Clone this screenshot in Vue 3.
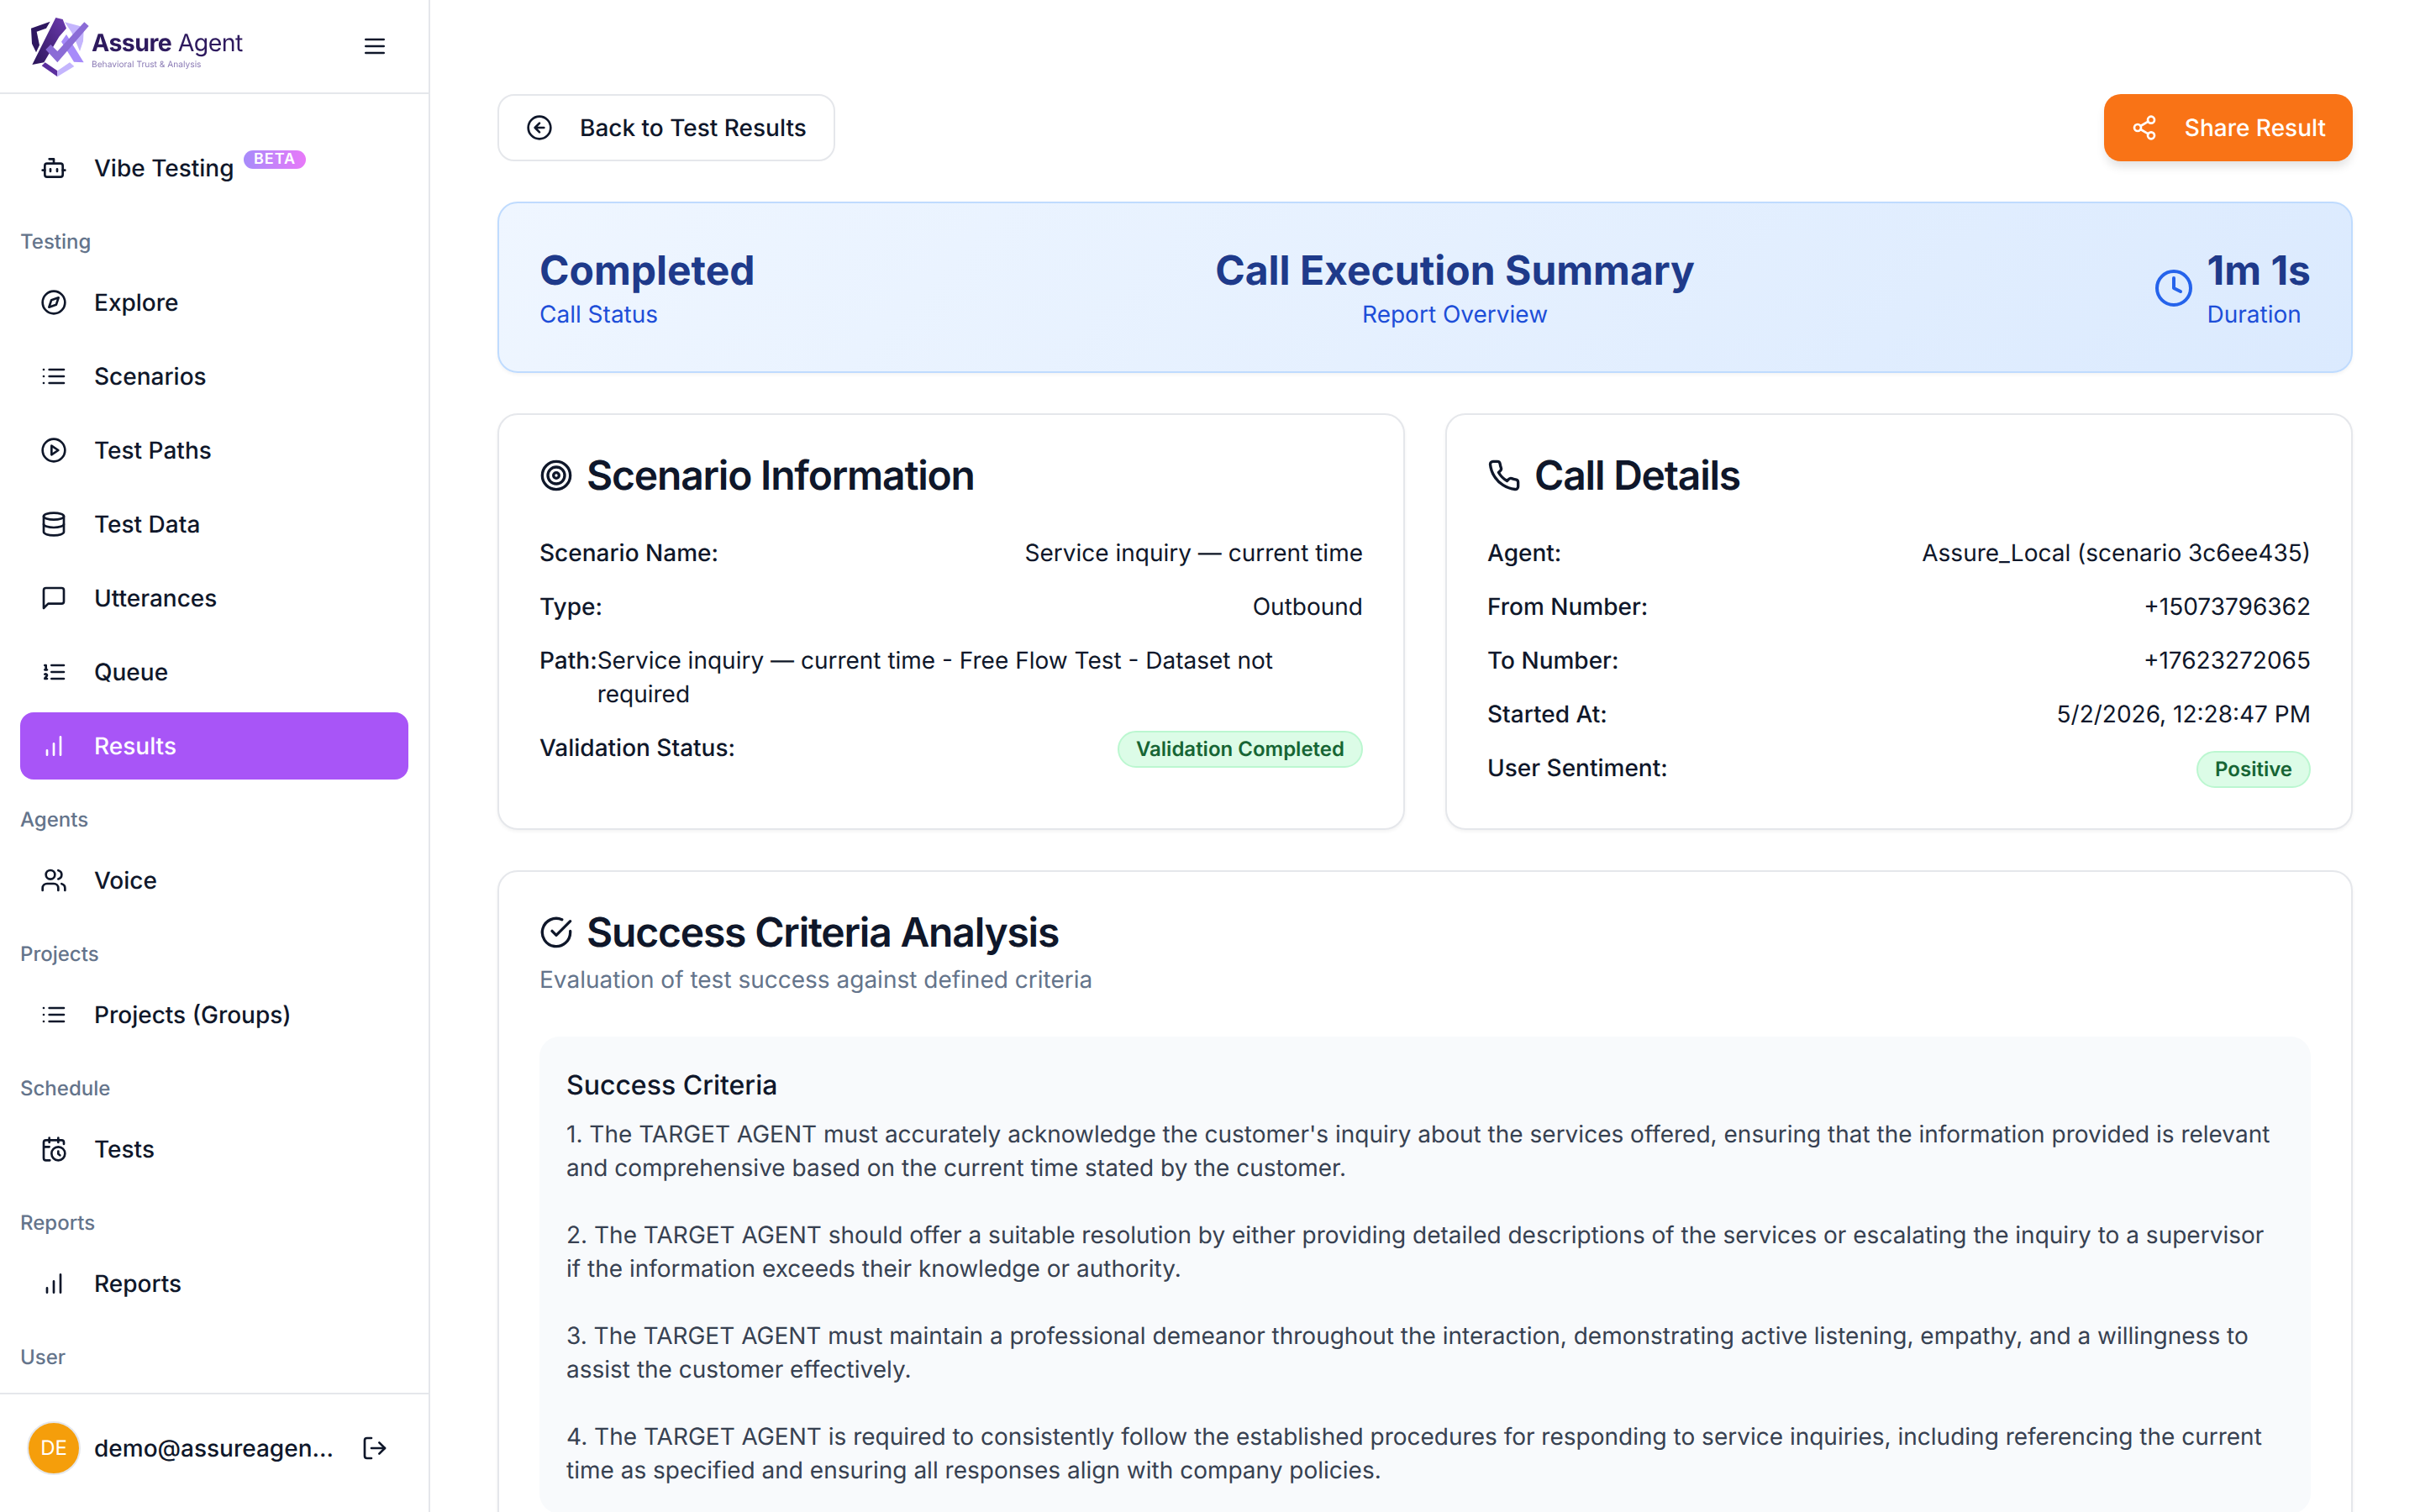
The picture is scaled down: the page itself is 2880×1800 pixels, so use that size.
<script setup>
const icons = {
  bot: '<path d="M12 8V4H8"/><rect x="4" y="8" width="16" height="12" rx="2"/><path d="M2 14h2M20 14h2M15 13v2M9 13v2"/>',
  compass: '<circle cx="12" cy="12" r="10"/><polygon points="16.24 7.76 14.12 14.12 7.76 16.24 9.88 9.88"/>',
  list: '<path d="M3 12h.01M3 18h.01M3 6h.01M8 12h13M8 18h13M8 6h13"/>',
  play: '<circle cx="12" cy="12" r="10"/><polygon points="10 8 16 12 10 16 10 8"/>',
  database: '<ellipse cx="12" cy="5" rx="9" ry="3"/><path d="M3 5V19A9 3 0 0 0 21 19V5"/><path d="M3 12A9 3 0 0 0 21 12"/>',
  message: '<path d="M21 15a2 2 0 0 1-2 2H7l-4 4V5a2 2 0 0 1 2-2h14a2 2 0 0 1 2 2z"/>',
  ordered: '<path d="M10 12h11M10 18h11M10 6h11M4 10h2M4 6h1v4M6 18H4c0-1 2-2 2-3s-1-1.5-2-1"/>',
  bars: '<path d="M12 20V10M18 20V4M6 20v-4"/>',
  users: '<path d="M16 21v-2a4 4 0 0 0-4-4H6a4 4 0 0 0-4 4v2"/><circle cx="9" cy="7" r="4"/><path d="M22 21v-2a4 4 0 0 0-3-3.87M16 3.13a4 4 0 0 1 0 7.75"/>',
  calendar: '<path d="M21 7.5V6a2 2 0 0 0-2-2H5a2 2 0 0 0-2 2v14a2 2 0 0 0 2 2h3.5M16 2v4M8 2v4M3 10h5M17.5 17.5 16 16.3V14"/><circle cx="16" cy="16" r="6"/>',
  logout: '<path d="M9 21H5a2 2 0 0 1-2-2V5a2 2 0 0 1 2-2h4"/><polyline points="16 17 21 12 16 7"/><line x1="21" y1="12" x2="9" y2="12"/>',
  menu: '<line x1="4" y1="12" x2="20" y2="12"/><line x1="4" y1="6" x2="20" y2="6"/><line x1="4" y1="18" x2="20" y2="18"/>',
  target: '<circle cx="12" cy="12" r="10"/><circle cx="12" cy="12" r="6"/><circle cx="12" cy="12" r="2"/>',
  phone: '<path d="M22 16.92v3a2 2 0 0 1-2.18 2 19.79 19.79 0 0 1-8.63-3.07 19.5 19.5 0 0 1-6-6 19.79 19.79 0 0 1-3.07-8.67A2 2 0 0 1 4.11 2h3a2 2 0 0 1 2 1.72 12.84 12.84 0 0 0 .7 2.81 2 2 0 0 1-.45 2.11L8.09 9.91a16 16 0 0 0 6 6l1.27-1.27a2 2 0 0 1 2.11-.45 12.84 12.84 0 0 0 2.81.7A2 2 0 0 1 22 16.92z"/>',
  check: '<path d="M22 11.08V12a10 10 0 1 1-5.93-9.14"/><polyline points="22 4 12 14.01 9 11.01"/>',
  clock: '<circle cx="12" cy="12" r="10"/><polyline points="12 6 12 12 16 14"/>',
  share: '<circle cx="18" cy="5" r="3"/><circle cx="6" cy="12" r="3"/><circle cx="18" cy="19" r="3"/><line x1="8.59" y1="13.51" x2="15.42" y2="17.49"/><line x1="15.41" y1="6.51" x2="8.59" y2="10.49"/>',
  back: '<circle cx="12" cy="12" r="10"/><path d="M16 12H8M12 8l-4 4 4 4"/>'
}

const groups = [
  { label: 'Testing', items: [
    { icon: 'compass', text: 'Explore' },
    { icon: 'list', text: 'Scenarios' },
    { icon: 'play', text: 'Test Paths' },
    { icon: 'database', text: 'Test Data' },
    { icon: 'message', text: 'Utterances' },
    { icon: 'ordered', text: 'Queue' },
    { icon: 'bars', text: 'Results', active: true }
  ] },
  { label: 'Agents', items: [{ icon: 'users', text: 'Voice' }] },
  { label: 'Projects', items: [{ icon: 'list', text: 'Projects (Groups)' }] },
  { label: 'Schedule', items: [{ icon: 'calendar', text: 'Tests' }] },
  { label: 'Reports', items: [{ icon: 'bars', text: 'Reports' }] },
  { label: 'User', items: [] }
]

const scenarioRows = [
  { label: 'Scenario Name:', value: 'Service inquiry — current time' },
  { label: 'Type:', value: 'Outbound' },
  { label: 'Path:', value: 'Service inquiry — current time - Free Flow Test - Dataset not required' },
  { label: 'Validation Status:', badge: 'Validation Completed' }
]

const callRows = [
  { label: 'Agent:', value: 'Assure_Local (scenario 3c6ee435)' },
  { label: 'From Number:', value: '+15073796362' },
  { label: 'To Number:', value: '+17623272065' },
  { label: 'Started At:', value: '5/2/2026, 12:28:47 PM' },
  { label: 'User Sentiment:', badge: 'Positive' }
]

const criteria = `1. The TARGET AGENT must accurately acknowledge the customer's inquiry about the services offered, ensuring that the information provided is relevant and comprehensive based on the current time stated by the customer.

2. The TARGET AGENT should offer a suitable resolution by either providing detailed descriptions of the services or escalating the inquiry to a supervisor if the information exceeds their knowledge or authority.

3. The TARGET AGENT must maintain a professional demeanor throughout the interaction, demonstrating active listening, empathy, and a willingness to assist the customer effectively.

4. The TARGET AGENT is required to consistently follow the established procedures for responding to service inquiries, including referencing the current time as specified and ensuring all responses align with company policies.`
</script>

<template>
  <div class="app">
    <aside class="sidebar">
      <header class="side-head">
        <div class="logo">
          <svg class="logo-mark" viewBox="40 20 225 230">
            <defs>
              <linearGradient id="legA" x1="0" y1="1" x2="1" y2="0">
                <stop offset="0" stop-color="#2a1458" />
                <stop offset="1" stop-color="#6d3bb0" />
              </linearGradient>
            </defs>
            <polygon fill="#2e1760" points="52,70 120,46 106,70 72,82 82,130 70,156 55,125" />
            <polygon fill="url(#legA)" points="140,32 165,38 178,70 152,100 98,192 56,200" />
            <polygon fill="#c4b5fd" points="172,48 226,62 240,76 238,116 226,152 212,118 196,84" />
            <polygon fill="#a78bfa" points="178,92 240,192 205,190 160,118" />
            <polygon fill="#8b6cd6" points="104,146 122,128 146,152 242,48 258,62 146,192" />
            <polygon fill="#5b2e9e" points="90,204 102,192 146,222 146,243" />
            <polygon fill="#c4b5fd" points="146,222 190,192 206,206 146,243" />
          </svg>
          <div class="logo-text">
            <div class="logo-name"><b>Assure</b> Agent</div>
            <div class="logo-tag">Behavioral Trust &amp; Analysis</div>
          </div>
        </div>
        <svg class="ico" viewBox="0 0 24 24" v-html="icons.menu"></svg>
      </header>

      <nav class="side-nav">
        <a class="item first">
          <svg class="ico" viewBox="0 0 24 24" v-html="icons.bot"></svg>
          <span>Vibe Testing</span>
          <span class="beta">BETA</span>
        </a>
        <section v-for="g in groups" :key="g.label" class="group">
          <div class="group-label">{{ g.label }}</div>
          <div class="group-items">
            <a v-for="it in g.items" :key="it.text" class="item" :class="{ active: it.active }">
              <svg class="ico" viewBox="0 0 24 24" v-html="icons[it.icon]"></svg>
              <span>{{ it.text }}</span>
            </a>
          </div>
        </section>
      </nav>

      <footer class="side-foot">
        <div class="avatar">DE</div>
        <span class="email">demo@assureagent.com</span>
        <svg class="ico" viewBox="0 0 24 24" v-html="icons.logout"></svg>
      </footer>
    </aside>

    <main class="main">
      <div class="top-bar">
        <button class="btn btn-back">
          <svg class="ico" viewBox="0 0 24 24" v-html="icons.back"></svg>
          Back to Test Results
        </button>
        <button class="btn btn-share">
          <svg class="ico" viewBox="0 0 24 24" v-html="icons.share"></svg>
          Share Result
        </button>
      </div>

      <section class="banner">
        <div>
          <div class="b-title">Completed</div>
          <div class="b-sub">Call Status</div>
        </div>
        <div class="b-center">
          <div class="b-title">Call Execution Summary</div>
          <div class="b-sub">Report Overview</div>
        </div>
        <div class="b-right">
          <svg class="ico ico-clock" viewBox="0 0 24 24" v-html="icons.clock"></svg>
          <div>
            <div class="b-title">1m 1s</div>
            <div class="b-sub">Duration</div>
          </div>
        </div>
      </section>

      <div class="two">
        <section class="card">
          <h2 class="c-title">
            <svg class="ico ico-title" viewBox="0 0 24 24" v-html="icons.target"></svg>
            Scenario Information
          </h2>
          <div class="rows">
            <div v-for="r in scenarioRows" :key="r.label" class="row">
              <span class="r-label">{{ r.label }}</span>
              <span v-if="r.badge" class="badge">{{ r.badge }}</span>
              <span v-else>{{ r.value }}</span>
            </div>
          </div>
        </section>
        <section class="card">
          <h2 class="c-title">
            <svg class="ico ico-title" viewBox="0 0 24 24" v-html="icons.phone"></svg>
            Call Details
          </h2>
          <div class="rows">
            <div v-for="r in callRows" :key="r.label" class="row">
              <span class="r-label">{{ r.label }}</span>
              <span v-if="r.badge" class="badge">{{ r.badge }}</span>
              <span v-else>{{ r.value }}</span>
            </div>
          </div>
        </section>
      </div>

      <section class="card">
        <h2 class="c-title">
          <svg class="ico ico-title" viewBox="0 0 24 24" v-html="icons.check"></svg>
          Success Criteria Analysis
        </h2>
        <p class="c-sub">Evaluation of test success against defined criteria</p>
        <div class="criteria">
          <h3 class="cr-title">Success Criteria</h3>
          <p class="cr-text">{{ criteria }}</p>
        </div>
      </section>
    </main>
  </div>
</template>

<style>
html, body { margin: 0; height: 100%; overflow: hidden; background: #fff; }
</style>

<style scoped>
.app {
  display: flex;
  width: 2880px;
  height: 1800px;
  overflow: hidden;
  background: #fff;
  color: #0f172a;
  font-family: Inter, "Noto Sans", sans-serif;
  font-size: 28px;
  line-height: 40px;
  text-rendering: geometricPrecision;
}
.ico {
  flex: none;
  width: 32px;
  height: 32px;
  fill: none;
  stroke: currentColor;
  stroke-width: 2;
  stroke-linecap: round;
  stroke-linejoin: round;
}

/* sidebar */
.sidebar {
  flex: none;
  width: 512px;
  height: 1800px;
  box-sizing: border-box;
  border-right: 2px solid #e5e7eb;
  display: flex;
  flex-direction: column;
}
.side-head {
  flex: none;
  height: 112px;
  box-sizing: border-box;
  border-bottom: 2px solid #e5e7eb;
  display: flex;
  align-items: center;
  justify-content: space-between;
  padding: 0 48px 0 33px;
}
.logo { display: flex; align-items: center; gap: 1px; filter: blur(0.4px); }
.logo-mark { width: 75px; height: 76.7px; flex: none; }
.logo-text { padding-top: 8px; }
.logo-name { font-size: 28.5px; line-height: 34px; letter-spacing: -0.55px; color: #2e1a5e; font-weight: 400; white-space: nowrap; }
.logo-name b { font-weight: 700; }
.logo-tag { font-size: 10.2px; line-height: 14px; margin-top: 2px; color: #8b7bb5; white-space: nowrap; }
.side-nav {
  flex: 1;
  min-height: 0;
  padding: 48px 24px 0;
  box-sizing: border-box;
}
.item {
  display: flex;
  align-items: center;
  height: 80px;
  padding-left: 24px;
  border-radius: 16px;
  gap: 32px;
  font-weight: 500;
  color: #0f172a;
}
.item.first { position: relative; }
.beta {
  position: absolute;
  left: 266px;
  top: 19px;
  width: 74px;
  height: 22px;
  border-radius: 11px;
  background: linear-gradient(90deg, #a78bfa, #e879f9);
  color: #fff;
  font-size: 18px;
  line-height: 22px;
  font-weight: 600;
  letter-spacing: 1px;
  text-align: center;
}
.group { padding-top: 16px; }
.group-label {
  height: 64px;
  display: flex;
  align-items: center;
  font-size: 24px;
  font-weight: 500;
  color: #64748b;
}
.group-items { display: flex; flex-direction: column; gap: 8px; }
.item.active { background: #a855f7; color: #fff; }
.side-foot {
  flex: none;
  height: 142px;
  box-sizing: border-box;
  border-top: 2px solid #e5e7eb;
  display: flex;
  align-items: center;
  padding: 0 48px 12px 32px;
}
.avatar {
  flex: none;
  width: 64px;
  height: 64px;
  box-sizing: border-box;
  border: 2px solid #e5e7eb;
  border-radius: 50%;
  background: #f59e0b;
  color: #fff;
  font-size: 24px;
  display: flex;
  align-items: center;
  justify-content: center;
}
.email {
  flex: 1;
  min-width: 0;
  margin: 0 30px 0 16px;
  overflow: hidden;
  white-space: nowrap;
  text-overflow: ellipsis;
  font-weight: 500;
}

/* main */
.main {
  flex: 1;
  min-width: 0;
  padding: 112px 80px 0;
  display: flex;
  flex-direction: column;
  gap: 48px;
  box-sizing: border-box;
}
.top-bar { display: flex; justify-content: space-between; flex: none; }
.btn {
  display: flex;
  align-items: center;
  gap: 32px;
  height: 80px;
  box-sizing: border-box;
  padding: 0 32px;
  border-radius: 20px;
  font: inherit;
  font-weight: 500;
  color: #0f172a;
  text-rendering: inherit;
}
.btn-back { background: #fff; border: 2px solid #e5e7eb; }
.btn-share {
  background: #f97316;
  border: none;
  color: #fff;
  box-shadow: 0 8px 12px -2px rgba(0, 0, 0, 0.12);
}
.banner {
  flex: none;
  box-sizing: border-box;
  height: 204px;
  border: 2px solid #bfdbfe;
  border-radius: 24px;
  background: linear-gradient(135deg, #eff6ff, #dbeafe);
  box-shadow: 0 2px 4px rgba(0, 0, 0, 0.05);
  padding: 50px 48px 46px;
  display: flex;
  justify-content: space-between;
  align-items: center;
}
.b-title { font-size: 48px; line-height: 56px; font-weight: 700; color: #1e3a8a; white-space: nowrap; }
.b-sub { font-size: 28px; line-height: 40px; margin-top: 4px; color: #1d4ed8; }
.b-center { text-align: center; }
.b-right { display: flex; align-items: center; gap: 16px; }
.ico-clock { width: 48px; height: 48px; color: #2563eb; margin: -2px 0 0 -2px; }
.two { display: grid; grid-template-columns: 1fr 1fr; gap: 48px; flex: none; }
.card {
  flex: none;
  box-sizing: border-box;
  border: 2px solid #e5e7eb;
  border-radius: 24px;
  background: #fff;
  box-shadow: 0 2px 4px rgba(0, 0, 0, 0.05);
  padding: 48px;
}
.c-title {
  margin: 0;
  display: flex;
  align-items: center;
  gap: 16px;
  font-size: 48px;
  line-height: 48px;
  font-weight: 600;
  letter-spacing: -1.2px;
  color: #0f172a;
}
.ico-title { width: 40px; height: 40px; }
.rows { margin-top: 48px; display: flex; flex-direction: column; gap: 24px; }
.row { display: flex; justify-content: space-between; align-items: flex-start; }
.r-label { flex: none; font-weight: 500; }
.badge {
  box-sizing: border-box;
  height: 44px;
  padding: 4px 20px;
  border: 2px solid #bbf7d0;
  border-radius: 22px;
  background: #dcfce7;
  color: #166534;
  font-size: 24px;
  line-height: 32px;
  font-weight: 600;
}
.c-sub { margin: 12px 0 0; color: #64748b; }
.criteria {
  margin-top: 48px;
  padding: 32px;
  border-radius: 24px;
  background: #f8fafc;
}
.cr-title { margin: 2px 0 0; font-size: 32px; line-height: 48px; font-weight: 500; color: #0f172a; }
.cr-text { margin: 14px 0 0; color: #374151; white-space: pre-line; }
</style>
